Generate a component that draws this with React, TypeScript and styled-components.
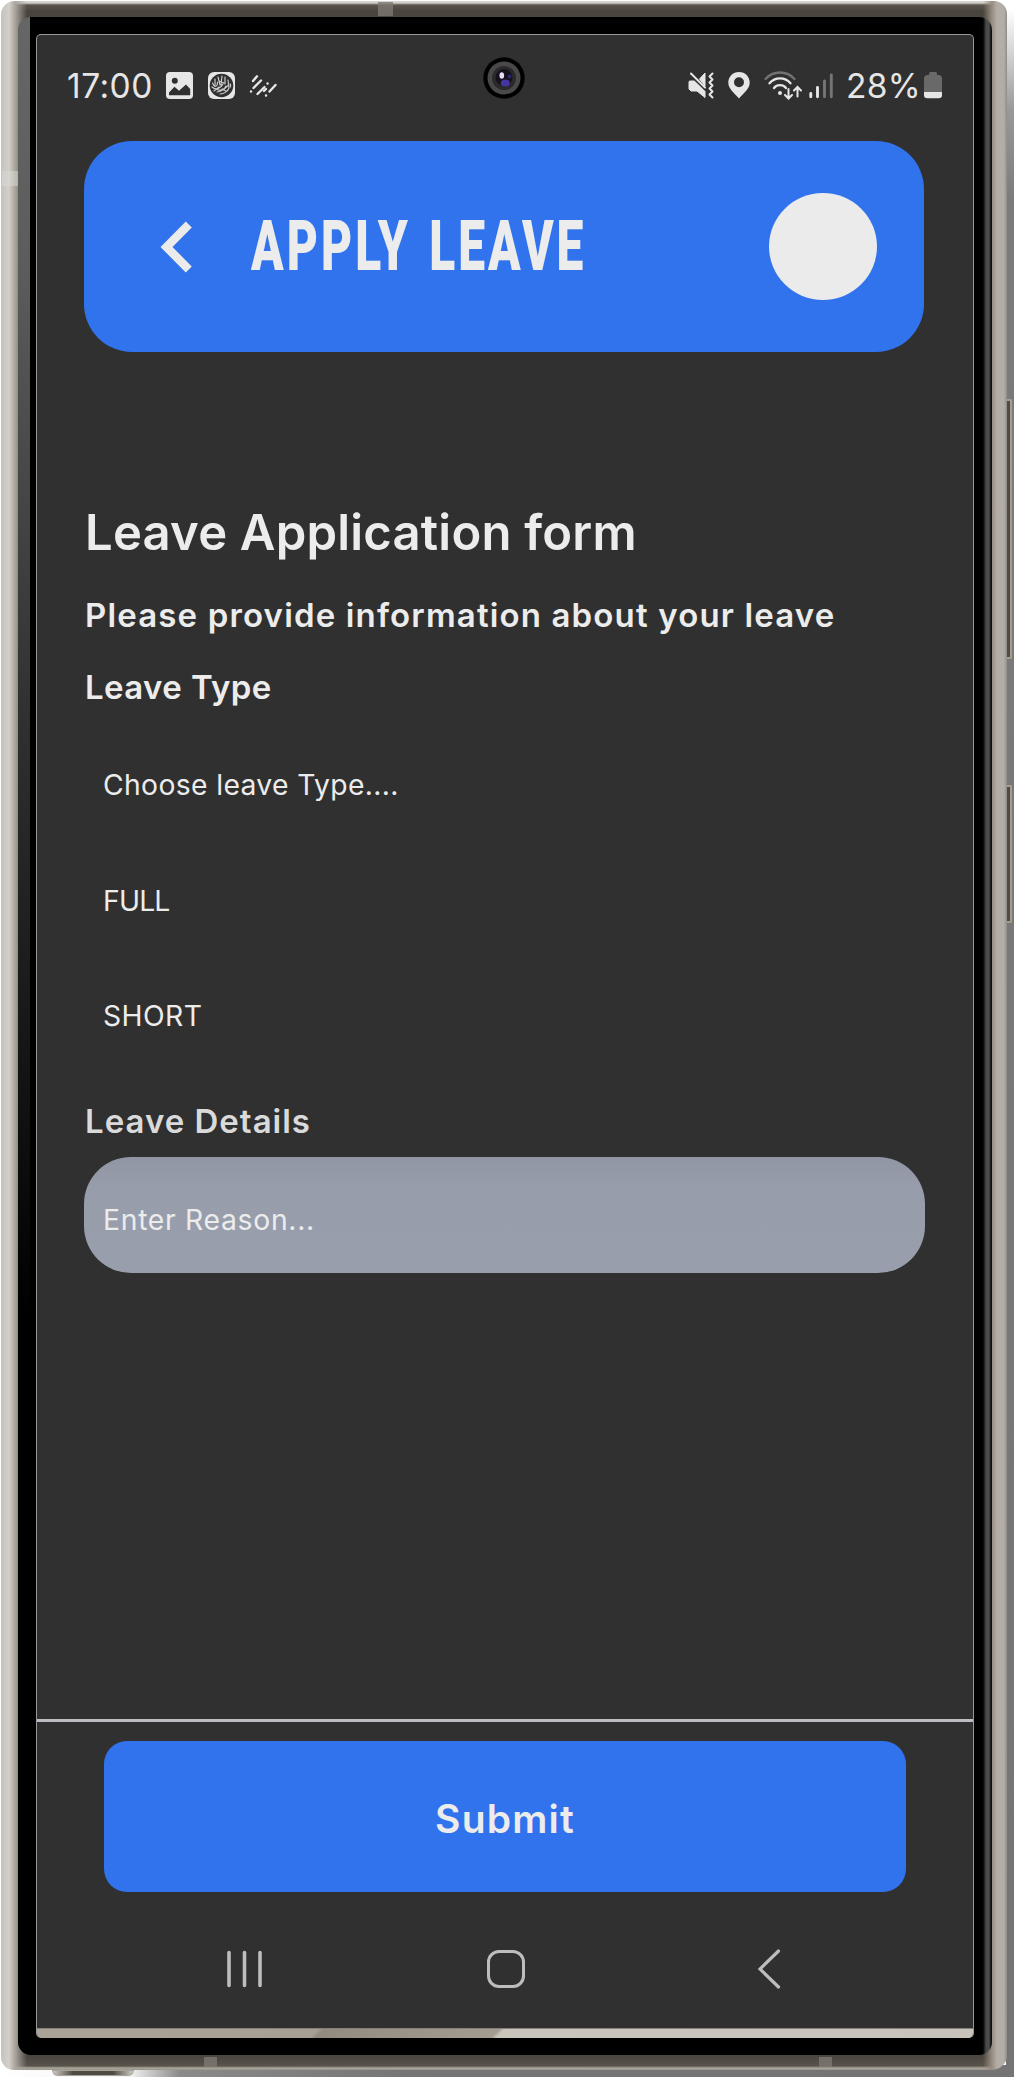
import React from "react";
import styled, { createGlobalStyle } from "styled-components";

const GlobalStyle = createGlobalStyle`
  * { box-sizing: border-box; }
  html, body { margin: 0; padding: 0; }
  body {
    width: 1014px;
    height: 2077px;
    overflow: hidden;
    font-family: Inter, "Open Sans", sans-serif;
    color: #ececec;
  }
`;

const Backdrop = styled.div`
  position: relative;
  width: 1014px;
  height: 2077px;
  padding: 1px 7px 7px 1px;
  background:
    linear-gradient(#fff 0, #fff 10px, #999 110px, #7b7b7b 200px, #747474 100%) right top / 8px 2068px no-repeat,
    linear-gradient(90deg, #fff 0, #f2f2f2 130px, #8a8a8a 180px, #767676 400px, #747474 100%) left bottom / 100% 12px no-repeat,
    #fff;
`;

const Frame = styled.div`
  width: 1006px;
  height: 2069px;
  padding: 16px 15px 15px 17px;
  border-radius: 14px 13px 15px 13px;
  border: 0;
  background:
    linear-gradient(90deg, #c6c3bd 0, #d3d0cb 8px, #aaa59d 14px, transparent 26px) left / 30px 100% no-repeat,
    linear-gradient(270deg, #8f8b86 0, #b2ada7 3px, #b5aea6 10px, #988d82 15px, transparent 24px) right / 26px 100% no-repeat,
    linear-gradient(#d8d7d2 0, #cfcdc7 2px, #5a554c 4px, #49443d 10px, #4b463f 2056px, #58534b 2065px, #aca79d 2067px, #98948b 2069px);
`;

const Bezel = styled.div`
  width: 974px;
  height: 2038px;
  padding: 17px 18px 17px 18px;
  border-radius: 13px;
  background:
    linear-gradient(#666 0, #5c5c5c 250px, #303030 700px, #000 1300px) left / 12px 100% no-repeat,
    linear-gradient(90deg, #000 0, #48494a 3px, #4d4e50 6px, #111 8px) right / 9px 100% no-repeat,
    #000;
`;

const Screen = styled.div`
  display: flex;
  flex-direction: column;
  width: 938px;
  height: 2004px;
  border: 1px solid #98979a;
  border-bottom: 0;
  border-radius: 5px;
  overflow: hidden;
  background: #303030;
`;

const AntennaBand = styled.i<{ $x: number; $y: number; $w: number; $h: number; $light?: boolean }>`
  position: absolute;
  left: ${(p) => p.$x}px;
  top: ${(p) => p.$y}px;
  width: ${(p) => p.$w}px;
  height: ${(p) => p.$h}px;
  background: ${(p) => (p.$light ? "#dcdad5" : "#7d7972")};
  opacity: ${(p) => (p.$light ? 0.5 : 0.8)};
`;

const SideKey = styled.i<{ $top: number; $height: number }>`
  position: absolute;
  left: 1007px;
  top: ${(p) => p.$top}px;
  width: 5px;
  height: ${(p) => p.$height}px;
  border: 1px solid #a59c92;
  border-width: 2px 2px 2px 0;
  border-radius: 0 2px 2px 0;
  background: #4f4a42;
`;

const BottomKey = styled.i`
  position: absolute;
  left: 52px;
  top: 2070px;
  width: 82px;
  height: 6px;
  border: 1px solid #a9a49c;
  border-radius: 0 0 6px 6px;
  background: linear-gradient(90deg, #cfcbc5, #4f4a42 25%, #4f4a42 75%, #cfcbc5);
`;

const Camera = styled.svg`
  position: absolute;
  left: 483px;
  top: 57px;
  width: 42px;
  height: 42px;
`;

const StatusBar = styled.div`
  display: flex;
  align-items: center;
  justify-content: space-between;
  height: 106px;
  padding: 0 31px 5px 30px;
`;

const StatusGroup = styled.div`
  display: flex;
  align-items: center;
  svg { display: block; flex: none; }
`;

const StatusText = styled.span<{ $w: number; $ls: number }>`
  width: ${(p) => p.$w}px;
  font-size: 33.5px;
  line-height: 40px;
  letter-spacing: ${(p) => p.$ls}px;
  white-space: nowrap;
  color: #e6e6e6;
`;

const Header = styled.header`
  display: flex;
  align-items: center;
  flex: none;
  width: 840px;
  height: 211px;
  margin-left: 47px;
  padding: 0 47px 0 76px;
  border-radius: 48px;
  background: #3173ed;
`;

const BackIcon = styled.svg`
  width: 32px;
  height: 52px;
  flex: none;
`;

const Title = styled.h1`
  flex: 1;
  margin: 0 0 0 59px;
  font-family: Roboto, sans-serif;
  font-size: 71px;
  line-height: 80px;
  font-weight: 900;
  letter-spacing: 4.5px;
  word-spacing: 5px;
  white-space: nowrap;
  transform: scaleX(0.675);
  transform-origin: 0 50%;
  padding-bottom: 2px;
`;

const Avatar = styled.div`
  flex: none;
  width: 108px;
  height: 107px;
  border-radius: 50%;
  background: #ebebeb;
`;

const Form = styled.main`
  display: flex;
  flex-direction: column;
  height: 1367px;
  padding: 151px 48px 0 47px;
`;

const FormTitle = styled.h2`
  margin: 0 0 0 1px;
  height: 60px;
  line-height: 60px;
  font-size: 49px;
  font-weight: 600;
  letter-spacing: 0.2px;
  white-space: nowrap;
`;

const Label = styled.h3<{ $h: number; $ls?: number; $gap?: number; $dim?: boolean }>`
  margin: ${(p) => p.$gap ?? 0}px 0 0 1px;
  height: ${(p) => p.$h}px;
  line-height: ${(p) => p.$h}px;
  font-size: 33px;
  font-weight: 600;
  letter-spacing: ${(p) => p.$ls ?? 0}px;
  white-space: nowrap;
  color: ${(p) => (p.$dim ? "#dadada" : "#ececec")};
`;

const Options = styled.div`
  display: flex;
  flex-direction: column;
  margin-top: 15px;
`;

const Option = styled.div<{ $ls?: number }>`
  height: 115.5px;
  padding: 12px 19px 0;
  line-height: 103.5px;
  font-size: 28.3px;
  letter-spacing: ${(p) => p.$ls ?? 0}px;
  color: #ececec;
`;

const ReasonField = styled(Option)`
  flex: none;
  height: 116px;
  border-radius: 47px;
  background: linear-gradient(#9196a4 0, #979dab 30px, #989eac 100%);
`;

const Footer = styled.footer`
  flex: none;
  display: flex;
  justify-content: center;
  height: 173px;
  padding-top: 19px;
  border-top: 3px solid #bdbcc2;
`;

const SubmitButton = styled.button`
  width: 802px;
  height: 151px;
  border: 0;
  padding: 3px 0 0;
  border-radius: 23px;
  background: #3173ed;
  color: #ececec;
  font: 600 39px Inter, sans-serif;
  letter-spacing: 1.2px;
`;

const NavBar = styled.nav`
  flex: none;
  display: flex;
  align-items: center;
  justify-content: space-between;
  height: 136px;
  padding: 17px 192px 0 189px;
  svg { display: block; }
`;

const HomeIcon = styled.svg`
  margin-right: 8px;
`;

const BottomGlint = styled.div`
  flex: none;
  height: 10px;
  border-top: 1px solid #8b7f7b;
  background: linear-gradient(135deg, #aaa397 0, #a79f94 199px, #928b80 203px, #a39c90 327px, #c9c5bc 331px, #c7c3ba 100%);
`;

const ink = "#e6e6e6";

const PictureIcon = () => (
  <svg width="27" height="27" viewBox="0 0 27 27">
    <rect width="27" height="27" rx="4" fill={ink} />
    <circle cx="8.8" cy="8.8" r="3" fill="#303030" />
    <path d="M3 20.5 8.5 14.8 13 18.8 20 12.5 24.2 17v6.3H3z" fill="#303030" />
  </svg>
);

const CalligraphyIcon = () => (
  <svg width="27" height="27" viewBox="0 0 27 27">
    <rect width="27" height="27" rx="6" fill={ink} />
    <circle cx="13.5" cy="13.5" r="11.8" fill="#303030" />
    <g fill="none" stroke="#c9c9c9" strokeWidth="1.2" strokeLinecap="round">
      <path d="M4.500 11c2 5 5 4 5-1M7 7v6M10 5l2 8M14 4l-1 9M17 5v7M20 8l1 8M4 15c4 4 9 1 11-3M9 20c5-1 9-3 12-8M8 17c3 2 9 1 10-3M12 22c4 0 8-3 9-6M6 19l5-4M14 17l4 2M11 9l5 2M22.500 12v3" />
    </g>
  </svg>
);

const StripesIcon = () => (
  <svg width="28" height="24" viewBox="0 0 28 24">
    <g stroke={ink} strokeWidth="2.4" strokeLinecap="round">
      <path d="M4 7 8 2.300M4.500 14 12 6.500M2 17.500h.1M8.500 20 15.500 13M18.500 9.500h.1M15 17l2-2M17 21.500h.1M20.500 17.500l6-6.500" />
    </g>
  </svg>
);

const MutedIcon = () => (
  <svg width="27" height="27" viewBox="0 0 27 27">
    <path d="M1.500 9h5l10.500 9.500V25.500L9 19H3L1 17V10zM17 1v13L11.500 7z" fill={ink} stroke={ink} strokeLinejoin="round" />
    <path d="M2 2.500 18 18.500" stroke="#303030" strokeWidth="2" />
    <path d="M3 1.500 17 15.500" stroke={ink} strokeWidth="2" strokeLinecap="round" />
    <path d="M24.500 1.500 21.500 4.500 24.500 7.500 21.500 10.500 24.500 13.500 21.500 16.500 24.500 19.500 21.500 22.500 24.500 25.500" fill="none" stroke={ink} strokeWidth="2" strokeLinejoin="round" strokeLinecap="round" />
  </svg>
);

const PinIcon = () => (
  <svg width="22" height="27" viewBox="0 0 22 27">
    <path fillRule="evenodd" d="M11 0C4.800 0 .3 4.700.3 10.600.3 16.500 5.500 20.500 11 26.500 16.500 20.500 21.700 16.500 21.700 10.600 21.700 4.700 17.200 0 11 0zM11 5.300a5 5 0 1 1 0 10 5 5 0 0 1 0-10z" fill={ink} />
  </svg>
);

const WifiIcon = () => (
  <svg width="38" height="29" viewBox="0 0 38 29">
    <g fill="none" strokeWidth="2.300" strokeLinecap="round">
      <path d="M1.500 8C9-.7 23-.7 30.500 8" stroke="#737373" />
      <path d="M5.500 12.300C11 5.700 21 5.700 26.500 12.300M10 17C13 13.200 19 13.200 22 17" stroke={ink} />
      <path d="M24.500 18v9M21 24l3.500 3.500L28 24M33.500 25.500v-9M30 19.500l3.500-3.500 3.500 3.500" stroke={ink} strokeWidth="2" />
    </g>
    <circle cx="16" cy="22" r="2" fill={ink} />
  </svg>
);

const SignalIcon = () => (
  <svg width="24" height="26" viewBox="0 0 24 26">
    <g strokeWidth="2.900" strokeLinecap="round">
      <path d="M1.800 20.500v3.200M8.500 14.500v9.200" stroke={ink} />
      <path d="M15.500 8v15.700M22.300 2v21.700" stroke="#757575" />
    </g>
  </svg>
);

const BatteryIcon = () => (
  <svg width="18" height="27" viewBox="0 0 18 27">
    <path d="M5 3V1.500Q5 0 6.500 0h5Q13 0 13 1.500V3h1.500Q18 3 18 6.500V20H0V6.500Q0 3 3.500 3z" fill="#696969" />
    <path d="M0 20h18v3Q18 26.300 14.700 26.300H3.300Q0 26.300 0 23z" fill={ink} />
  </svg>
);

const Gap = styled.span<{ $w: number }>`
  flex: none;
  width: ${(p) => p.$w}px;
`;

export default function App() {
  return (
    <>
      <GlobalStyle />
      <Backdrop>
        <Frame>
          <Bezel>
            <Screen>
              <StatusBar>
                <StatusGroup>
                  <StatusText $w={99} $ls={0.5}>17:00</StatusText>
                  <PictureIcon />
                  <Gap $w={15} />
                  <CalligraphyIcon />
                  <Gap $w={14} />
                  <StripesIcon />
                </StatusGroup>
                <StatusGroup>
                  <MutedIcon />
                  <Gap $w={13} />
                  <PinIcon />
                  <Gap $w={14} />
                  <WifiIcon />
                  <Gap $w={7} />
                  <SignalIcon />
                  <Gap $w={13} />
                  <StatusText $w={78} $ls={0.3}>28%</StatusText>
                  <BatteryIcon />
                </StatusGroup>
              </StatusBar>
              <Header>
                <BackIcon viewBox="0 0 32 52">
                  <path d="M28.800 3.500 6.500 26 28.800 48.500" fill="none" stroke="#ebebeb" strokeWidth="8.500" />
                </BackIcon>
                <Title>APPLY LEAVE</Title>
                <Avatar />
              </Header>
              <Form>
                <FormTitle>Leave Application form</FormTitle>
                <Label $h={105} $ls={1.15}>Please provide information about your leave</Label>
                <Label $h={39} $ls={0.4}>Leave Type</Label>
                <Options>
                  <Option $ls={0.35}>Choose leave Type....</Option>
                  <Option $ls={-0.8}>FULL</Option>
                  <Option $ls={0.4}>SHORT</Option>
                </Options>
                <Label $h={72} $ls={1} $gap={16.5} $dim>Leave Details</Label>
                <ReasonField $ls={0.7}>Enter Reason...</ReasonField>
              </Form>
              <Footer>
                <SubmitButton>Submit</SubmitButton>
              </Footer>
              <NavBar>
                <svg width="37" height="38" viewBox="0 0 37 38">
                  <path d="M3 2.500v33M18.500 2.500v33M34 2.500v33" stroke="#bdbdbd" strokeWidth="3.600" strokeLinecap="round" />
                </svg>
                <HomeIcon width="40" height="40" viewBox="0 0 40 40">
                  <rect x="2.500" y="2.500" width="35" height="35" rx="10.500" fill="none" stroke="#bdbdbd" strokeWidth="3" />
                </HomeIcon>
                <svg width="24" height="40" viewBox="0 0 24 40">
                  <path d="M21.500 2 3 20l18.500 18" fill="none" stroke="#bdbdbd" strokeWidth="3.200" strokeLinecap="round" />
                </svg>
              </NavBar>
              <BottomGlint />
            </Screen>
          </Bezel>
        </Frame>
        <AntennaBand $x={378} $y={2} $w={15} $h={14} />
        <AntennaBand $x={2} $y={171} $w={16} $h={15} $light />
        <AntennaBand $x={204} $y={2057} $w={13} $h={10} />
        <AntennaBand $x={819} $y={2057} $w={13} $h={10} />
        <SideKey $top={399} $height={260} />
        <SideKey $top={785} $height={138} />
        <BottomKey />
        <Camera viewBox="0 0 42 42">
          <circle cx="21" cy="21" r="20.700" fill="#000" />
          <circle cx="21" cy="21" r="16.500" fill="#4a494a" />
          <circle cx="21" cy="21" r="12" fill="#2b292c" />
          <circle cx="21" cy="20.500" r="8.500" fill="#16121d" />
          <ellipse cx="22.300" cy="26" rx="4.500" ry="3.500" fill="#4436a0" />
          <circle cx="26.500" cy="19.500" r="2" fill="#29276a" />
          <ellipse cx="18.800" cy="18.500" rx="2.300" ry="3.200" fill="#e9dcf7" />
        </Camera>
      </Backdrop>
    </>
  );
}
